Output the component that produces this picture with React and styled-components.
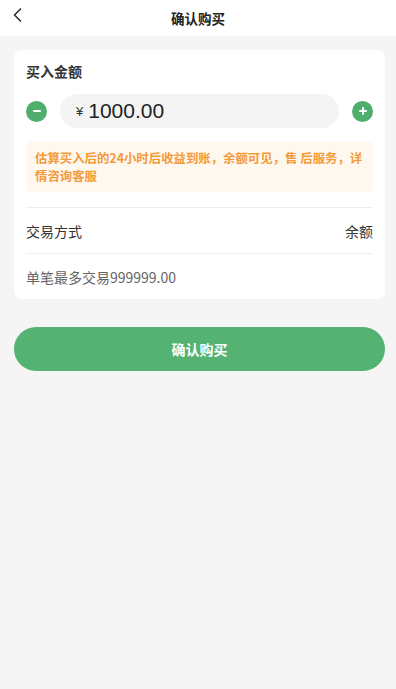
import React, { useState } from "react";
import styled, { createGlobalStyle } from "styled-components";

const GlobalStyle = createGlobalStyle`
body {
  margin: 0;
  background: #f5f5f6;
  font-family: "Liberation Sans", "Noto Sans CJK SC", sans-serif;
  color: #333;
}
`;

const Page = styled.div`
min-height: 689px;
background: #f5f5f6;
`;

const Header = styled.div`
height: 36px;
background: #fff;
display: flex;
align-items: center;
justify-content: center;
position: relative;
`;

const BackButton = styled.button`
position: absolute;
left: 8px;
top: 4px;
border: none;
background: none;
padding: 0;
width: 20px;
height: 22px;
display: flex;
align-items: center;
justify-content: center;
`;

const Title = styled.h1`
margin: 0;
font-size: 13.5px;
font-weight: 700;
color: #222;
font-family: "Noto Sans CJK SC", sans-serif;
`;

const Body = styled.div`
padding: 14px 11px 0 14px;
`;

const Card = styled.div`
background: #fff;
border-radius: 8px;
padding: 11px 12px 0 12px;
`;

const Label = styled.div`
font-size: 14px;
font-weight: 700;
line-height: 20px;
color: #333;
font-family: "Noto Sans CJK SC", sans-serif;
`;

const AmountRow = styled.div`
margin-top: 13px;
display: flex;
align-items: center;
gap: 13px;
`;

const RoundButton = styled.button`
flex: none;
width: 21px;
height: 21px;
border-radius: 50%;
border: none;
padding: 0;
background: #4fae6c;
display: flex;
align-items: center;
justify-content: center;
`;

const AmountBox = styled.div`
flex: 1;
height: 34px;
border-radius: 17px;
background: #f4f4f5;
display: flex;
align-items: center;
padding-left: 16px;
`;

const Currency = styled.span`
font-size: 13px;
color: #333;
margin-right: 5px;
margin-top: 1px;
`;

const Amount = styled.span`
font-size: 21px;
color: #222;
`;

const Notice = styled.div`
margin-top: 14px;
background: #fff8ef;
border-radius: 5px;
padding: 7px 6px 7px 9px;
font-size: 12.4px;
line-height: 18px;
font-weight: 700;
color: #f39a3b;
font-family: "Noto Sans CJK SC", sans-serif;
`;

const Rows = styled.div`
margin-top: 15px;
`;

const Row = styled.div`
height: 45px;
display: flex;
align-items: center;
justify-content: space-between;
font-size: 14px;
color: ${p => (p.muted ? "#666" : "#333")};
border-top: ${p => (p.divider ? "1px solid #eeeeee" : "none")};
font-family: "Noto Sans CJK SC", sans-serif;
`;

const ConfirmButton = styled.button`
margin-top: 28px;
width: 100%;
height: 44px;
border: none;
border-radius: 22px;
background: #54b273;
color: #fff;
font-size: 14px;
font-weight: 700;
font-family: "Noto Sans CJK SC", sans-serif;
`;

const Minus = () => (
    <svg width="10" height="10" viewBox="0 0 10 10">
        <rect x="1" y="4" width="8" height="2" rx="1" fill="#fff" />
    </svg>
);

const Plus = () => (
    <svg width="10" height="10" viewBox="0 0 10 10">
        <rect x="1" y="4" width="8" height="2" rx="1" fill="#fff" />
        <rect x="4" y="1" width="2" height="8" rx="1" fill="#fff" />
    </svg>
);

const App = () => {
    const [amount, setAmount] = useState(1000);

    return (
        <>
        <GlobalStyle />
        <Page>
            <Header>
                <BackButton>
                    <svg width="12" height="16" viewBox="0 0 12 16">
                        <path d="M9 1.5 L2.5 8 L9 14.5" fill="none" stroke="#222" strokeWidth="1.4" />
                    </svg>
                </BackButton>
                <Title>确认购买</Title>
            </Header>
            <Body>
                <Card>
                    <Label>买入金额</Label>
                    <AmountRow>
                        <RoundButton onClick={() => setAmount(a => Math.max(0, a - 100))}>
                            <Minus />
                        </RoundButton>
                        <AmountBox>
                            <Currency>¥</Currency>
                            <Amount>{amount.toFixed(2)}</Amount>
                        </AmountBox>
                        <RoundButton onClick={() => setAmount(a => a + 100)}>
                            <Plus />
                        </RoundButton>
                    </AmountRow>
                    <Notice>估算买入后的24小时后收益到账，余额可见，售 后服务，详情咨询客服</Notice>
                    <Rows>
                        <Row divider>
                            <span>交易方式</span>
                            <span>余额</span>
                        </Row>
                        <Row divider muted>
                            <span>单笔最多交易999999.00</span>
                        </Row>
                    </Rows>
                </Card>
                <ConfirmButton>确认购买</ConfirmButton>
            </Body>
        </Page>
        </>
    );
};

export default App;
